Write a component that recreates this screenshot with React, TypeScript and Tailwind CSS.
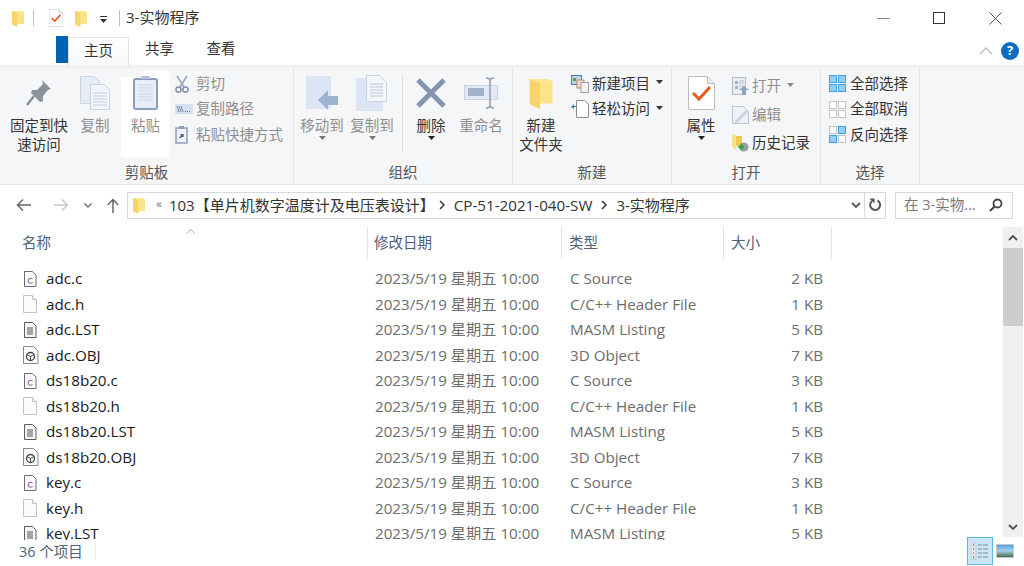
import { ReactNode } from 'react';

// ============================================
// Icons
// ============================================

const FolderIcon = ({ className = 'w-[12px] h-[17px]' }: { className?: string }) => (
  <svg viewBox="0 0 12 17" className={className}>
    <path d="M0 1h9.500l2.500 1v12H2z" fill="#fde592" />
    <path d="M0 1l5.500 2.500V17L0 14.500z" fill="#f8d469" />
    <path d="M5.500 3.500H12V14H5.500z" fill="#fce289" />
  </svg>
);

const CheckDoc = ({ className }: { className: string }) => (
  <svg viewBox="0 0 27 34" className={className}>
    <path d="M.5.5h19l7 7v26H.5z" fill="#fff" stroke="#bdbdbd" />
    <path d="M19.5.5v7h7" fill="#eee" stroke="#bdbdbd" />
    <path d="M5 17l6 6 11-12" fill="none" stroke="#e8591c" strokeWidth="3" />
  </svg>
);

const Caret = ({ color = '#444' }: { color?: string }) => (
  <svg viewBox="0 0 7 4" className="w-[7px] h-[4px]">
    <path d="M0 0h7L3.5 4z" fill={color} />
  </svg>
);

const PaperStack = () => (
  <svg viewBox="0 0 30 34" className="w-[30px] h-[34px]">
    <path d="M.5.5h14l5 5v22H.5z" fill="#e6ecf6" stroke="#c9d3e3" />
    <path d="M10.5 8.5h14l5 5v20h-19z" fill="#f3f6fb" stroke="#c9d3e3" />
    <path d="M13 17h14M13 20h14M13 23h14M13 26h14M13 29h14" stroke="#c3cedf" />
  </svg>
);

const PasteIcon = () => (
  <svg viewBox="0 0 25 35" className="w-[25px] h-[35px]">
    <rect x="1" y="4" width="23" height="30" rx="2" fill="#e8eef7" stroke="#8c9dbd" strokeWidth="2" />
    <path d="M8 4h9v-3h-9z" fill="#b7c2d6" />
    <path d="M5 10h15M5 13h15M5 16h15M5 19h15M5 22h15M5 25h15" stroke="#ccd6e6" />
  </svg>
);

const PinIcon = () => (
  <svg viewBox="0 0 26 28" className="w-[26px] h-[28px]">
    <path d="M16 1l9 9-3 1-5 6 0 5-3 1-9-9 1-3 5 0 6-6z" fill="#8a949c" />
    <path d="M8 17L1 26" stroke="#8a949c" strokeWidth="2.5" />
  </svg>
);

const MoveIcon = () => (
  <svg viewBox="0 0 33 34" className="w-[33px] h-[34px]">
    <rect x="0" y="0" width="25" height="33" fill="#dce5f3" />
    <path d="M12 24l10-10v6h10v9H22v5z" fill="#9fb2cf" />
  </svg>
);

const CopyToIcon = () => (
  <svg viewBox="0 0 33 36" className="w-[33px] h-[36px]">
    <rect x="0" y="3" width="27" height="33" fill="#dce5f3" />
    <path d="M10.5.5h13l7 7v19h-20z" fill="#f3f6fb" stroke="#c9d3e3" />
    <path d="M14 9h13M14 12h13M14 15h13M14 18h13M14 21h13" stroke="#b9c6da" />
  </svg>
);

const DeleteIcon = () => (
  <svg viewBox="0 0 30 30" className="w-[30px] h-[30px]">
    <path d="M2 2l26 26M28 2L2 28" stroke="#8494b2" strokeWidth="5" />
  </svg>
);

const RenameIcon = () => (
  <svg viewBox="0 0 35 32" className="w-[35px] h-[32px]">
    <rect x=".5" y="8.5" width="33" height="14" fill="#e3eaf5" stroke="#c9d5e7" />
    <rect x="4" y="11" width="16" height="8" fill="#a3b2cb" />
    <path d="M22 1c3 0 4 1 4 3v24c0 2-1 3-4 3M30 1c-3 0-4 1-4 3v24c0 2 1 3 4 3" fill="none" stroke="#8d9cb6" strokeWidth="1.5" />
  </svg>
);

const ScissorsIcon = () => (
  <svg viewBox="0 0 14 18" className="w-[14px] h-[18px]">
    <path d="M2 1l7 11M12 1L5 12" stroke="#9aa9bf" strokeWidth="1.6" />
    <circle cx="3.5" cy="14.5" r="2.6" fill="none" stroke="#7f90ab" strokeWidth="1.5" />
    <circle cx="10.5" cy="14.5" r="2.6" fill="none" stroke="#7f90ab" strokeWidth="1.5" />
  </svg>
);

const PathIcon = () => (
  <svg viewBox="0 0 18 10" className="w-[18px] h-[10px]">
    <rect width="18" height="10" fill="#d5e0f0" />
    <path d="M2 2l2 6M4 2l2 6M6 2l2 6" stroke="#64748f" strokeWidth=".8" />
    <path d="M10 7.5h1M12 7.5h1M14 7.5h1" stroke="#64748f" />
  </svg>
);

const ShortcutIcon = () => (
  <svg viewBox="0 0 13 18" className="w-[13px] h-[18px]">
    <rect x="1" y="2" width="11" height="15" fill="#eef2f8" stroke="#8e9fba" strokeWidth="1.5" />
    <rect x="4" y="0" width="5" height="3" fill="#8e9fba" />
    <path d="M4.5 12l3-3M5.5 8.5h2.5v2.5" fill="none" stroke="#44546d" strokeWidth="1.2" />
  </svg>
);

const NewItemIcon = () => (
  <svg viewBox="0 0 18 18" className="w-[18px] h-[18px]">
    <rect x=".5" y=".5" width="10" height="9" fill="#bcd3ea" stroke="#4f7da6" />
    <rect x="2" y="3" width="3" height="3" fill="#5d9c5a" />
    <rect x="6" y="5" width="7" height="8" fill="#f4dbc4" stroke="#b68f6f" />
    <rect x="10" y="7.500" width="7.500" height="10" fill="#f2f2f4" stroke="#9aa0ad" />
  </svg>
);

const EasyAccessIcon = () => (
  <svg viewBox="0 0 18 18" className="w-[18px] h-[18px]">
    <path d="M5.500.5h8l4 4v13h-12z" fill="#fff" stroke="#8d8d8d" />
    <path d="M0 7l3-3v2h3v1H3v2z" fill="#2c7fc4" />
  </svg>
);

const OpenIcon = () => (
  <svg viewBox="0 0 17 18" className="w-[17px] h-[18px]">
    <rect x=".5" y=".5" width="13" height="17" fill="#e9edf4" stroke="#aeb9ca" />
    <path d="M3 4h3v3H3zM3 9h3v3H3z" fill="#a5b2c6" />
    <path d="M7 4h5M7 6h5M7 9h5" stroke="#b4bfd0" />
    <path d="M12 9l5 4h-3v5h-4v-5H7z" fill="#8da2c0" />
  </svg>
);

const EditIcon = () => (
  <svg viewBox="0 0 17 18" className="w-[17px] h-[18px]">
    <path d="M.5.500h11l5 5v12H.5z" fill="#eef2f8" stroke="#b7c4d8" />
    <path d="M3 15L14 4l2 2-11 11H3z" fill="#c7d3e5" />
  </svg>
);

const HistoryIcon = () => (
  <svg viewBox="0 0 17 18" className="w-[17px] h-[18px]">
    <path d="M0 0l5 2h5v11H5z" fill="#f2c94c" />
    <path d="M0 0l4 2v14l-4-3z" fill="#fbe08a" />
    <circle cx="12" cy="13" r="4.500" fill="#9a9fa6" />
    <path d="M6 13l4-4v2.500h2v3h-2V17z" fill="#2fa84f" />
  </svg>
);

const SelectGrid = ({ cells, line }: { cells: string[]; line: string }) => (
  <div className="grid grid-cols-2 gap-px w-[17px] h-[17px]">
    {cells.map((c, i) => (
      <div key={i} className={`border ${c !== '#ffffff' ? line : 'border-[#c4c4c4]'}`} style={{ backgroundColor: c }} />
    ))}
  </div>
);

const FileC = () => (
  <svg viewBox="0 0 14 16" className="w-[14px] h-[16px]">
    <path d="M1.500.500h8l3.500 3.500v11.500H1.500z" fill="#fafafa" stroke="#6b6b6b" />
    <path d="M9.500 8.200a2.500 2.500 0 1 0 0 3.200" fill="none" stroke="#a060b0" strokeWidth="1.100" />
  </svg>
);

const FileH = () => (
  <svg viewBox="0 0 14 18" className="w-[14px] h-[18px]">
    <path d="M.500.500h9l4 4v13h-13z" fill="#fcfcfc" stroke="#c4c4c4" />
    <path d="M9.500.500v4h4" fill="#f0f0f0" stroke="#c4c4c4" />
  </svg>
);

const FileLst = () => (
  <svg viewBox="0 0 14 16" className="w-[14px] h-[16px]">
    <path d="M1.500.500h8l3.500 3.500v11.500H1.500z" fill="#f6f6f6" stroke="#5c5c5c" />
    <path d="M4 6h6M4 8h6M4 10h6M4 12h6" stroke="#555" />
  </svg>
);

const FileObj = () => (
  <svg viewBox="0 0 16 18" className="w-[16px] h-[18px]">
    <path d="M.500.500h10l4.500 4.500v12.500H.500z" fill="#fafafa" stroke="#8a8a8a" />
    <circle cx="7.500" cy="10.500" r="4" fill="none" stroke="#444" strokeWidth="1.300" />
    <path d="M7.500 10.500V14.500M7.500 10.500l-3.500-2M7.500 10.500l3.500-2" stroke="#444" />
  </svg>
);

// ============================================
// Ribbon parts
// ============================================

const LargeButton = ({
  width,
  icon,
  lines,
  dim,
  caret,
  className = '',
}: {
  width: string;
  icon: ReactNode;
  lines: string[];
  dim?: boolean;
  caret?: string;
  className?: string;
}) => (
  <div className={`flex flex-col items-center shrink-0 ${width} ${className}`}>
    <div className="h-[37px] flex items-center justify-center">{icon}</div>
    <div className={`mt-[5px] text-[14.500px] leading-[19px] text-center whitespace-nowrap ${dim ? 'text-[#8f8f8f]' : 'text-[#333]'}`}>
      {lines.map((l) => (
        <div key={l}>{l}</div>
      ))}
    </div>
    {caret && (
      <div className="mt-[1px]">
        <Caret color={caret} />
      </div>
    )}
  </div>
);

const SmallButton = ({
  icon,
  label,
  dim,
  caret,
  rowHeight = 'h-[25.500px]',
  iconWidth = 'w-[21px]',
}: {
  icon: ReactNode;
  label: string;
  dim?: boolean;
  caret?: boolean;
  rowHeight?: string;
  iconWidth?: string;
}) => (
  <div className={`flex items-center ${rowHeight}`}>
    <div className={`${iconWidth} shrink-0 flex items-center`}>{icon}</div>
    <span className={`text-[14.500px] whitespace-nowrap ${dim ? 'text-[#8f8f8f]' : 'text-[#333]'}`}>{label}</span>
    {caret && (
      <span className="ml-[6px] mb-[3px] flex">
        <Caret color={dim ? '#888' : '#333'} />
      </span>
    )}
  </div>
);

const RibbonGroup = ({
  width,
  label,
  children,
}: {
  width: string;
  label: string;
  children: ReactNode;
}) => (
  <div className={`flex flex-col shrink-0 ${width} border-r border-[#e4e6e8]`}>
    <div className="flex h-[94px] items-start pt-[6px]">{children}</div>
    <div className="h-[23px] flex items-center justify-center text-[14.500px] text-[#555]">{label}</div>
  </div>
);

// ============================================
// Data
// ============================================

type Kind = 'c' | 'h' | 'lst' | 'obj';

const kinds: Record<Kind, { type: string; icon: ReactNode; ext: string }> = {
  c: { type: 'C Source', icon: <FileC />, ext: '.c' },
  h: { type: 'C/C++ Header File', icon: <FileH />, ext: '.h' },
  lst: { type: 'MASM Listing', icon: <FileLst />, ext: '.LST' },
  obj: { type: '3D Object', icon: <FileObj />, ext: '.OBJ' },
};

const files: { base: string; kind: Kind; size: string }[] = [
  { base: 'adc', kind: 'c', size: '2 KB' },
  { base: 'adc', kind: 'h', size: '1 KB' },
  { base: 'adc', kind: 'lst', size: '5 KB' },
  { base: 'adc', kind: 'obj', size: '7 KB' },
  { base: 'ds18b20', kind: 'c', size: '3 KB' },
  { base: 'ds18b20', kind: 'h', size: '1 KB' },
  { base: 'ds18b20', kind: 'lst', size: '5 KB' },
  { base: 'ds18b20', kind: 'obj', size: '7 KB' },
  { base: 'key', kind: 'c', size: '3 KB' },
  { base: 'key', kind: 'h', size: '1 KB' },
  { base: 'key', kind: 'lst', size: '5 KB' },
];

const PathArrow = () => (
  <svg viewBox="0 0 6 10" className="w-[6px] h-[10px] shrink-0">
    <path d="M1 1l4 4-4 4" fill="none" stroke="#333" strokeWidth="1.500" />
  </svg>
);

export default function App() {
  return (
    <div className="w-[1024px] h-[566px] overflow-hidden bg-white flex flex-col font-['Open_Sans','Noto_Sans_CJK_SC',sans-serif]">
      {/* Title bar */}
      <div className="h-[36px] shrink-0 flex items-center">
        <div className="ml-[12px]"><FolderIcon /></div>
        <div className="ml-[9px] w-px h-[16px] bg-[#bdbdbd]" />
        <div className="ml-[15px] flex"><CheckDoc className="w-[14px] h-[18px]" /></div>
        <div className="ml-[12px]"><FolderIcon /></div>
        <div className="ml-[13px] flex flex-col items-center gap-[2px] mt-[2px]">
          <div className="w-[7px] h-px bg-[#333]" />
          <Caret color="#333" />
        </div>
        <div className="ml-[12px] w-px h-[16px] bg-[#bdbdbd]" />
        <div className="ml-[6px] text-[15px] text-[#333] whitespace-nowrap -mt-[1px]">3-实物程序</div>
        <div className="ml-auto flex items-center">
          <div className="w-[13px] h-px bg-[#888] mr-[43px]" />
          <div className="w-[12px] h-[12px] border border-[#333] mr-[44px]" />
          <svg viewBox="0 0 13 13" className="w-[13px] h-[13px] mr-[22px]">
            <path d="M.5.5l12 12M12.500.5l-12 12" stroke="#555" />
          </svg>
        </div>
      </div>

      {/* Tabs */}
      <div className="h-[29px] shrink-0 flex items-end relative z-10 pl-[56px]">
        <div className="w-[12px] h-[27px] bg-[#0063b1] mb-[2px]" />
        <div className="w-[61px] h-[29px] pb-[3px] bg-gradient-to-b from-white to-[#f7f8f9] border border-b-0 border-[#dfe1e3] flex items-center justify-center text-[14.500px] text-[#333] -mb-px">主页</div>
        <div className="w-[61px] h-[29px] pb-[3px] flex items-center justify-center text-[14.500px] text-[#333]">共享</div>
        <div className="w-[62px] h-[29px] pb-[3px] flex items-center justify-center text-[14.500px] text-[#333]">查看</div>
        <div className="ml-auto flex items-center h-[29px] mr-[5px]">
          <svg viewBox="0 0 14 8" className="w-[14px] h-[8px] mr-[8px]">
            <path d="M1 7l6-6 6 6" fill="none" stroke="#c0c0c0" strokeWidth="1.500" />
          </svg>
          <div className="w-[18px] h-[18px] rounded-full bg-[#0b6cc4] flex items-center justify-center text-white text-[13px] font-bold leading-none">?</div>
        </div>
      </div>

      {/* Ribbon */}
      <div className="h-[120px] shrink-0 bg-[#f5f6f7] border-t-[3px] border-b border-t-[#eef0f2] border-b-[#e2e4e6] flex">
        <RibbonGroup width="w-[294px]" label="剪贴板">
          <LargeButton width="w-[68px]" className="ml-[5px]" icon={<PinIcon />} lines={['固定到快', '速访问']} />
          <LargeButton width="w-[44px]" icon={<PaperStack />} lines={['复制']} dim />
          <div className="relative ml-[4px] mt-[3px] w-[49px] h-[80px] bg-white shrink-0">
            <div className="absolute left-[20px] -top-[6px] w-[29px] h-[6px] bg-white" />
            <LargeButton width="w-[49px]" className="relative -mt-[3px]" icon={<PasteIcon />} lines={['粘贴']} dim />
          </div>
          <div className="ml-[5px] -mt-[3px] flex flex-col">
            <SmallButton icon={<ScissorsIcon />} label="剪切" dim />
            <SmallButton icon={<PathIcon />} label="复制路径" dim />
            <SmallButton icon={<ShortcutIcon />} label="粘贴快捷方式" dim />
          </div>
        </RibbonGroup>

        <RibbonGroup width="w-[219px]" label="组织">
          <LargeButton width="w-[50px]" className="ml-[3px]" icon={<MoveIcon />} lines={['移动到']} dim caret="#777" />
          <LargeButton width="w-[50px]" icon={<CopyToIcon />} lines={['复制到']} dim caret="#777" />
          <div className="w-px h-[78px] bg-[#dfe1e3] ml-[5px] mr-[3px] shrink-0" />
          <LargeButton width="w-[50px]" icon={<DeleteIcon />} lines={['删除']} caret="#222" />
          <LargeButton width="w-[50px]" icon={<RenameIcon />} lines={['重命名']} dim />
        </RibbonGroup>

        <RibbonGroup width="w-[159px]" label="新建">
          <LargeButton width="w-[56px]" icon={<FolderIcon className="w-[24px] h-[32px]" />} lines={['新建', '文件夹']} />
          <div className="ml-[2px] -mt-[3px] flex flex-col">
            <SmallButton icon={<NewItemIcon />} label="新建项目" caret />
            <SmallButton icon={<EasyAccessIcon />} label="轻松访问" caret />
          </div>
        </RibbonGroup>

        <RibbonGroup width="w-[149px]" label="打开">
          <LargeButton width="w-[58px]" icon={<CheckDoc className="w-[27px] h-[34px]" />} lines={['属性']} caret="#222" />
          <div className="-mt-[2px] ml-[2px] flex flex-col">
            <SmallButton icon={<OpenIcon />} label="打开" dim caret rowHeight="h-[28.500px]" iconWidth="w-[20px]" />
            <SmallButton icon={<EditIcon />} label="编辑" dim rowHeight="h-[28.500px]" iconWidth="w-[20px]" />
            <SmallButton icon={<HistoryIcon />} label="历史记录" rowHeight="h-[28.500px]" iconWidth="w-[20px]" />
          </div>
        </RibbonGroup>

        <RibbonGroup width="w-[99px]" label="选择">
          <div className="ml-[8px] -mt-[3px] flex flex-col">
            <SmallButton
              icon={<SelectGrid cells={['#8fd0f8', '#8fd0f8', '#8fd0f8', '#8fd0f8']} line="border-[#3f9fe0]" />}
              label="全部选择"
            />
            <SmallButton
              icon={<SelectGrid cells={['#ffffff', '#ffffff', '#ffffff', '#ffffff']} line="border-[#c4c4c4]" />}
              label="全部取消"
            />
            <SmallButton
              icon={<SelectGrid cells={['#ffffff', '#8fd0f8', '#8fd0f8', '#ffffff']} line="border-[#3f9fe0]" />}
              label="反向选择"
            />
          </div>
        </RibbonGroup>
      </div>

      {/* Address bar */}
      <div className="h-[34px] shrink-0 flex items-center mt-[3px]">
        <svg viewBox="0 0 16 14" className="ml-[16px] w-[16px] h-[14px]">
          <path d="M15 7H2M7 1.500L1.500 7 7 12.500" fill="none" stroke="#666" strokeWidth="1.500" />
        </svg>
        <svg viewBox="0 0 16 14" className="ml-[21px] w-[16px] h-[14px]">
          <path d="M1 7h13M9 1.500L14.500 7 9 12.500" fill="none" stroke="#c8c8c8" strokeWidth="1.500" />
        </svg>
        <svg viewBox="0 0 8 5" className="ml-[15px] w-[8px] h-[5px]">
          <path d="M.5.5L4 4 7.500.5" fill="none" stroke="#666" strokeWidth="1.300" />
        </svg>
        <svg viewBox="0 0 12 15" className="ml-[15px] w-[12px] h-[15px]">
          <path d="M6 15V2M.8 7L6 1.500 11.200 7" fill="none" stroke="#666" strokeWidth="1.500" />
        </svg>
        <div className="ml-[8px] w-[759px] h-[27px] border border-[#d9d9d9] flex items-center">
          <div className="ml-[5px]"><FolderIcon className="w-[12px] h-[17px]" /></div>
          <span className="ml-[11px] text-[12px] text-[#777] leading-none mb-[2px]">«</span>
          <span className="ml-[7px] text-[15px] text-[#333] whitespace-nowrap">103【单片机数字温度计及电压表设计】</span>
          <span className="ml-[4px] flex"><PathArrow /></span>
          <span className="ml-[9px] text-[15.200px] text-[#333] whitespace-nowrap">CP-51-2021-040-SW</span>
          <span className="ml-[9px] flex"><PathArrow /></span>
          <span className="ml-[9px] text-[15px] text-[#333] whitespace-nowrap">3-实物程序</span>
          <svg viewBox="0 0 10 6" className="ml-auto mr-[3px] w-[10px] h-[6px]">
            <path d="M1 1l4 4 4-4" fill="none" stroke="#555" strokeWidth="1.800" />
          </svg>
          <div className="w-[21px] h-full border-l border-[#d9d9d9] flex items-center justify-center">
            <svg viewBox="0 0 14 14" className="w-[14px] h-[14px]">
              <path d="M9.500 2.500A5 5 0 1 1 4 3" fill="none" stroke="#555" strokeWidth="2" />
              <path d="M1.500 .5h5v5z" fill="#555" />
            </svg>
          </div>
        </div>
        <div className="ml-[9px] w-[118px] h-[27px] border border-[#d9d9d9] flex items-center">
          <span className="ml-[8px] text-[14.500px] text-[#777] whitespace-nowrap">在 3-实物...</span>
          <svg viewBox="0 0 14 14" className="ml-auto mr-[9px] w-[14px] h-[14px]">
            <circle cx="8.500" cy="5.500" r="4" fill="none" stroke="#444" strokeWidth="1.800" />
            <path d="M5.500 8.500L1 13" stroke="#444" strokeWidth="2.200" />
          </svg>
        </div>
      </div>

      {/* File list + scrollbar */}
      <div className="h-[318px] shrink-0 flex overflow-hidden">
        <div className="w-[1003px] shrink-0 pl-[22px] pt-[4px] relative">
          <svg viewBox="0 0 9 5" className="absolute left-[186px] top-[7px] w-[9px] h-[5px]">
            <path d="M.5 4.500L4.500.5l4 4" fill="none" stroke="#aaa" />
          </svg>
          {/* Header */}
          <div className="flex h-[34px] text-[14.500px] text-[#4c607a]">
            <div className="w-[346px] flex items-center border-r border-[#e5e5e5]">名称</div>
            <div className="w-[194px] pl-[6px] flex items-center border-r border-[#e5e5e5]">修改日期</div>
            <div className="w-[162px] pl-[7px] flex items-center border-r border-[#e5e5e5]">类型</div>
            <div className="w-[108px] pl-[7px] flex items-center border-r border-[#e5e5e5]">大小</div>
          </div>
          {/* Rows */}
          <div className="pt-[6px]">
            {files.map((f) => (
              <div key={f.base + f.kind} className="flex h-[25.500px] items-center text-[15.200px]">
                <div className="w-[346px] flex items-center">
                  <div className="w-[24px] flex justify-start pl-[1px]">{kinds[f.kind].icon}</div>
                  <span className="text-[#1a1a1a]">{f.base + kinds[f.kind].ext}</span>
                </div>
                <div className="w-[194px] pl-[7px] text-[#6d6d6d] whitespace-nowrap">2023/5/19 星期五 10:00</div>
                <div className="w-[162px] pl-[8px] text-[#6d6d6d] whitespace-nowrap">{kinds[f.kind].type}</div>
                <div className="w-[99px] text-right text-[#6d6d6d]">{f.size}</div>
              </div>
            ))}
          </div>
        </div>
        {/* Scrollbar */}
        <div className="w-[20px] shrink-0 h-[310px] mt-[5px] bg-[#f0f0f0] flex flex-col items-center">
          <div className="h-[21px] shrink-0 flex items-center justify-center">
            <svg viewBox="0 0 10 6" className="w-[10px] h-[6px]">
              <path d="M1 5l4-4 4 4" fill="none" stroke="#505050" strokeWidth="1.800" />
            </svg>
          </div>
          <div className="w-full h-[78px] bg-[#cdcdcd] shrink-0" />
          <div className="mt-auto h-[21px] flex items-center justify-center">
            <svg viewBox="0 0 10 6" className="w-[10px] h-[6px]">
              <path d="M1 1l4 4 4-4" fill="none" stroke="#505050" strokeWidth="1.800" />
            </svg>
          </div>
        </div>
      </div>

      {/* Status bar */}
      <div className="h-[26px] shrink-0 flex items-center relative">
        <span className="ml-[19px] -mt-[3px] text-[14.500px] text-[#4c607a] whitespace-nowrap">36 个项目</span>
        <div className="ml-[12px] -mt-[3px] w-px h-[14px] bg-[#e8e8e8]" />
        <div className="ml-auto mr-[10px] -mt-[4px] flex items-center">
          <div className="w-[26px] h-[28px] bg-[#c9e6f7] border border-[#5fb6e3] flex items-center justify-center">
            <svg viewBox="0 0 18 18" className="w-[18px] h-[18px]">
              <rect x="0" y="1" width="5" height="16" fill="#e5e5e5" stroke="#aaa" strokeWidth=".5" />
              <path d="M7 3h4M12 3h5M7 7h4M12 7h5M7 11h4M12 11h5M7 15h4M12 15h5" stroke="#888" />
              <path d="M2 3h1M2 7h1M2 15h1" stroke="#444" />
              <path d="M2 11h1" stroke="#c03030" />
            </svg>
          </div>
          <div className="ml-[3px] w-[18px] h-[14px] border border-[#c8c8c8] bg-gradient-to-b from-[#4f9fe0] via-[#a8d0e8] to-[#3f6f4f]" />
        </div>
      </div>
    </div>
  );
}
